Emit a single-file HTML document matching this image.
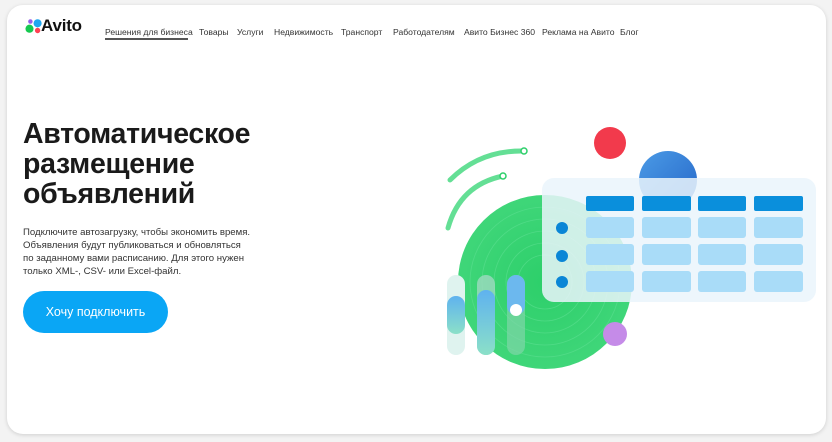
<!DOCTYPE html>
<html><head><meta charset="utf-8"><style>
*{margin:0;padding:0;box-sizing:border-box}
body{width:832px;height:442px;background:#f3f3f3;font-family:"Liberation Sans",sans-serif;position:relative;overflow:hidden}
.card{position:absolute;left:7px;top:5px;width:819px;height:429px;background:#fff;border-radius:16px;box-shadow:0 1px 4px rgba(0,0,0,.15);overflow:hidden}
.nav{position:absolute;top:22px;font-size:8.6px;color:#333;white-space:nowrap}
.nav span{position:absolute}
h1{position:absolute;left:16px;top:114px;font-size:28.5px;line-height:30px;font-weight:bold;color:#1a1a1a;letter-spacing:-0.3px}
p{position:absolute;left:16px;top:221px;font-size:9.6px;line-height:13px;color:#333}
.btn{position:absolute;left:16px;top:286px;width:145px;height:42px;border-radius:21px;background:#0aa6f5;color:#fff;font-size:12.5px;line-height:42px;text-align:center}
</style></head><body>
<div class="card">
<svg style="position:absolute;left:18px;top:12px" width="18" height="18" viewBox="0 0 20 20">
<circle cx="14" cy="7" r="4.5" fill="#1fa7f0"/><circle cx="5" cy="13" r="4.5" fill="#16c950"/><circle cx="14" cy="15" r="3" fill="#ff4053"/><circle cx="6" cy="5" r="2.5" fill="#965eeb"/></svg>
<div style="position:absolute;left:34px;top:11px;font-size:17px;font-weight:bold;color:#111;letter-spacing:-0.2px">Avito</div>
<div class="nav">
<span style="left:98px">Решения для бизнеса</span>
<span style="left:192px">Товары</span>
<span style="left:230px">Услуги</span>
<span style="left:267px">Недвижимость</span>
<span style="left:334px">Транспорт</span>
<span style="left:386px">Работодателям</span>
<span style="left:457px">Авито Бизнес 360</span>
<span style="left:535px">Реклама на Авито</span>
<span style="left:613px">Блог</span>
</div>
<div style="position:absolute;left:98px;top:33px;width:83px;height:1.5px;background:#555"></div>
<h1>Автоматическое<br>размещение<br>объявлений</h1>
<p>Подключите автозагрузку, чтобы экономить время.<br>Объявления будут публиковаться и обновляться<br>по заданному вами расписанию. Для этого нужен<br>только XML-, CSV- или Excel-файл.</p>
<div class="btn">Хочу подключить</div>
<svg style="position:absolute;left:413px;top:105px" width="400" height="270" viewBox="420 110 400 270">
<defs>
<radialGradient id="g" cx="0.5" cy="0.5" r="0.5"><stop offset="0" stop-color="#2dcf6a"/><stop offset="1" stop-color="#3fd679"/></radialGradient>
<linearGradient id="b" x1="0" y1="0" x2="0" y2="1"><stop offset="0" stop-color="#5fb2ef"/><stop offset="1" stop-color="#8be0c8"/></linearGradient>
<linearGradient id="bl" x1="0" y1="0" x2="1" y2="1"><stop offset="0" stop-color="#4b9be6"/><stop offset="1" stop-color="#2566c8"/></linearGradient>
</defs>
<path d="M450 180 Q480 150 524 151" stroke="#3dd77a" stroke-width="5" fill="none" stroke-linecap="round" opacity=".8"/>
<path d="M448 228 Q460 185 503 176" stroke="#3dd77a" stroke-width="5" fill="none" stroke-linecap="round" opacity=".8"/>
<circle cx="524" cy="151" r="3" fill="#fff" stroke="#2dcf6a" stroke-width="1.5"/>
<circle cx="503" cy="176" r="3" fill="#fff" stroke="#2dcf6a" stroke-width="1.5"/>
<circle cx="610" cy="143" r="16" fill="#f23a4c"/>
<circle cx="668" cy="180" r="29" fill="url(#bl)"/>
<circle cx="545" cy="282" r="87" fill="url(#g)"/>
<g fill="none" stroke="#5fe093" stroke-width=".8" opacity=".6">
<circle cx="545" cy="282" r="75"/><circle cx="545" cy="282" r="63"/><circle cx="545" cy="282" r="51"/><circle cx="545" cy="282" r="39"/><circle cx="545" cy="282" r="27"/></g>
<rect x="542" y="178" width="274" height="124" rx="12" fill="#eaf5fb" opacity=".85"/>
<g fill="#0a8fdc">
<rect x="586" y="196" width="48" height="15" rx="2"/><rect x="642" y="196" width="49" height="15" rx="2"/><rect x="698" y="196" width="48" height="15" rx="2"/><rect x="754" y="196" width="49" height="15" rx="2"/></g>
<g fill="#a9dcf8">
<rect x="586" y="217" width="48" height="21" rx="3"/><rect x="642" y="217" width="49" height="21" rx="3"/><rect x="698" y="217" width="48" height="21" rx="3"/><rect x="754" y="217" width="49" height="21" rx="3"/>
<rect x="586" y="244" width="48" height="21" rx="3"/><rect x="642" y="244" width="49" height="21" rx="3"/><rect x="698" y="244" width="48" height="21" rx="3"/><rect x="754" y="244" width="49" height="21" rx="3"/>
<rect x="586" y="271" width="48" height="21" rx="3"/><rect x="642" y="271" width="49" height="21" rx="3"/><rect x="698" y="271" width="48" height="21" rx="3"/><rect x="754" y="271" width="49" height="21" rx="3"/></g>
<g fill="#0a86d6"><circle cx="562" cy="228" r="6"/><circle cx="562" cy="256" r="6"/><circle cx="562" cy="282" r="6"/></g>
<rect x="447" y="275" width="18" height="80" rx="9" fill="#dff3ef"/>
<rect x="447" y="296" width="18" height="38" rx="9" fill="url(#b)"/>
<rect x="477" y="275" width="18" height="80" rx="9" fill="#9fd9c0" opacity=".8"/>
<rect x="477" y="290" width="18" height="65" rx="9" fill="url(#b)"/>
<rect x="507" y="275" width="18" height="80" rx="9" fill="#7fd6a8" opacity=".7"/>
<rect x="507" y="275" width="18" height="40" rx="9" fill="#6cb8ee"/>
<circle cx="516" cy="310" r="6" fill="#fff"/>
<circle cx="615" cy="334" r="12" fill="#c58be8"/>
</svg>
</div>
</body></html>
